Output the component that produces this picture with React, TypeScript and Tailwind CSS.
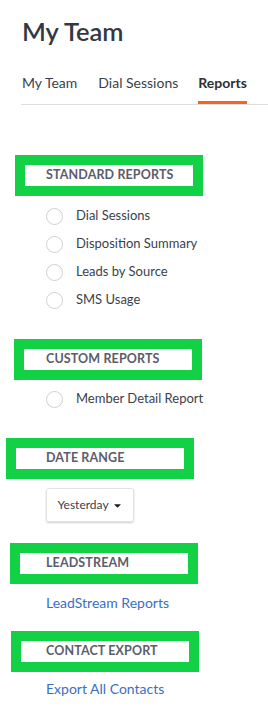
import { FaCaretDown } from "react-icons/fa";

type Section = {
  title: string;
  offset: string;
  pad: string;
};

const Heading = ({ title, offset, pad }: Section) => {
  return (
    <div className={`w-[188px] border-[10px] border-[#12d145] ${offset}`}>
      <div
        className={`h-[21px] flex items-center text-[12.5px] font-bold text-[#5a5d6b] tracking-[0.01em] ${pad}`}
      >
        {title}
      </div>
    </div>
  );
};

const Radio = ({ label }: { label: string }) => {
  return (
    <div className="flex items-center h-[28px] pl-[46px]">
      <span className="w-[17px] h-[17px] rounded-full border border-[#cfcfcf] bg-white" />
      <span className="ml-[13px] text-[13px] text-[#3b3f4c]">{label}</span>
    </div>
  );
};

const App = () => {
  return (
    <div className="w-[268px] h-[709px] bg-white overflow-hidden font-['Lato',sans-serif]">
      <h1 className="pl-[22px] pt-[15px] text-[25.5px] leading-[32px] font-semibold text-[#333842]">
        My Team
      </h1>
      <div className="mt-[25px] ml-[21px] border-b border-[#dedede] flex text-[14px] text-[#3b3f4c]">
        <span className="ml-[1px] pb-[10px]">My Team</span>
        <span className="ml-[21px] pb-[10px]">Dial Sessions</span>
        <span className="ml-[20px] pb-[8px] font-bold text-[#2d3038] border-b-[3px] border-[#f26522]">
          Reports
        </span>
      </div>

      <div className="mt-[50px]">
        <Heading title="STANDARD REPORTS" offset="ml-[15px]" pad="pl-[21px]" />
        <div className="mt-[6px]">
          <Radio label="Dial Sessions" />
          <Radio label="Disposition Summary" />
          <Radio label="Leads by Source" />
          <Radio label="SMS Usage" />
        </div>
      </div>

      <div className="mt-[25px]">
        <Heading title="CUSTOM REPORTS" offset="ml-[14px]" pad="pl-[22px]" />
        <div className="mt-[5px]">
          <Radio label="Member Detail Report" />
        </div>
      </div>

      <div className="mt-[25px]">
        <Heading title="DATE RANGE" offset="ml-[6px]" pad="pl-[30px]" />
        <button className="mt-[9px] ml-[46px] w-[88px] h-[34px] rounded-[3px] border border-[#e2e2e2] shadow-[0_1px_2px_rgba(0,0,0,0.2)] flex items-center justify-center gap-[3px] text-[12px] text-[#3b3f4c]">
          Yesterday
          <FaCaretDown size={11} className="text-[#222]" />
        </button>
      </div>

      <div className="mt-[21px]">
        <Heading title="LEADSTREAM" offset="ml-[10px]" pad="pl-[26px]" />
        <a className="block mt-[8px] ml-[46px] text-[14px] text-[#3a6fc4]" href="#">
          LeadStream Reports
        </a>
      </div>

      <div className="mt-[18px]">
        <Heading title="CONTACT EXPORT" offset="ml-[11px]" pad="pl-[25px]" />
        <a className="block mt-[6px] ml-[46px] text-[14px] text-[#3a6fc4]" href="#">
          Export All Contacts
        </a>
      </div>
    </div>
  );
};

export default App;
